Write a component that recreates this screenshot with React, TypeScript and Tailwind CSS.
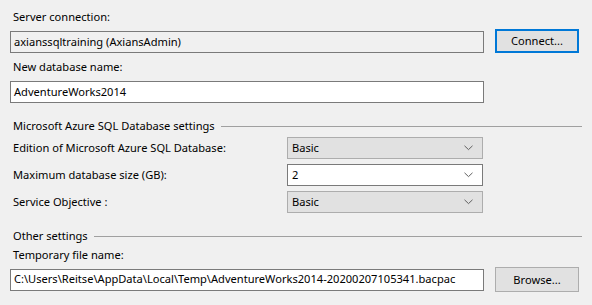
import React from 'react';

function Chevron() {
    return (
        <svg width="9" height="6" viewBox="0 0 9 6" className="shrink-0">
            <polyline points="0.5,0.8 4.5,4.6 8.5,0.8" fill="none" stroke="#606060" strokeWidth="1" />
        </svg>
    );
}

function Combo({ value, editable }: { value: string; editable?: boolean }) {
    return (
        <div
            className={`flex h-[22px] w-[196px] items-center justify-between border pl-[4px] pr-[9px] ${editable ? 'border-[#7a7a7a] bg-white' : 'border-[#adadad] bg-[#e1e1e1]'}`}
        >
            <span>{value}</span>
            <Chevron />
        </div>
    );
}

function GroupHeading({ title }: { title: string }) {
    return (
        <div className="flex h-[16px] items-center pl-[3px] pr-[10px]">
            <span className="leading-[16px]">{title}</span>
            <div className="ml-[6px] h-px flex-1 bg-[#a0a0a0]" />
        </div>
    );
}

export default function App() {
    return (
        <div className="h-[305px] w-[592px] whitespace-nowrap bg-[#f0f0f0] font-['Segoe_UI','Noto_Sans',sans-serif] text-[11.1px] text-black">
            <div className="pl-[10px] pt-[9px]">
                {/* Server connection */}
                <div className="pl-[3px] leading-[16px]">Server connection:</div>
                <div className="mt-[4px] flex items-end">
                    <div className="flex h-[22px] w-[474px] items-center border border-[#7a7a7a] bg-[#f0f0f0] pl-[3px]">
                        axianssqltraining (AxiansAdmin)
                    </div>
                    <button className="ml-[11px] h-[24px] w-[84px] border-2 border-[#0078d7] bg-[#e1e1e1] leading-[16px]">
                        Connect...
                    </button>
                </div>

                <div className="mt-[6px] pl-[3px] leading-[16px]">New database name:</div>
                <div className="mt-[6px] flex h-[22px] w-[474px] items-center border border-[#7a7a7a] bg-white pl-[3px]">
                    AdventureWorks2014
                </div>

                {/* Azure settings */}
                <div className="mt-[15px]">
                    <GroupHeading title="Microsoft Azure SQL Database settings" />
                </div>
                <div className="mt-[3px] flex flex-col gap-[5px]">
                    <div className="flex items-center">
                        <span className="w-[277px] pl-[3px]">Edition of Microsoft Azure SQL Database:</span>
                        <Combo value="Basic" />
                    </div>
                    <div className="flex items-center">
                        <span className="w-[277px] pl-[3px]">Maximum database size (GB):</span>
                        <Combo value="2" editable />
                    </div>
                    <div className="flex items-center">
                        <span className="w-[277px] pl-[3px]">Service Objective :</span>
                        <Combo value="Basic" />
                    </div>
                </div>

                {/* Other settings */}
                <div className="mt-[15px]">
                    <GroupHeading title="Other settings" />
                </div>
                <div className="mt-[3px] pl-[3px] leading-[16px]">Temporary file name:</div>
                <div className="mt-[4px] flex items-center">
                    <div className="flex h-[22px] w-[474px] items-center overflow-hidden border border-[#7a7a7a] bg-white pl-[3px]">
                        C:\Users\Reitse\AppData\Local\Temp\AdventureWorks2014-20200207105341.bacpac
                    </div>
                    <button className="ml-[11px] h-[25px] w-[84px] border border-[#adadad] bg-[#e1e1e1] leading-[16px]">
                        Browse...
                    </button>
                </div>
            </div>
        </div>
    );
}
